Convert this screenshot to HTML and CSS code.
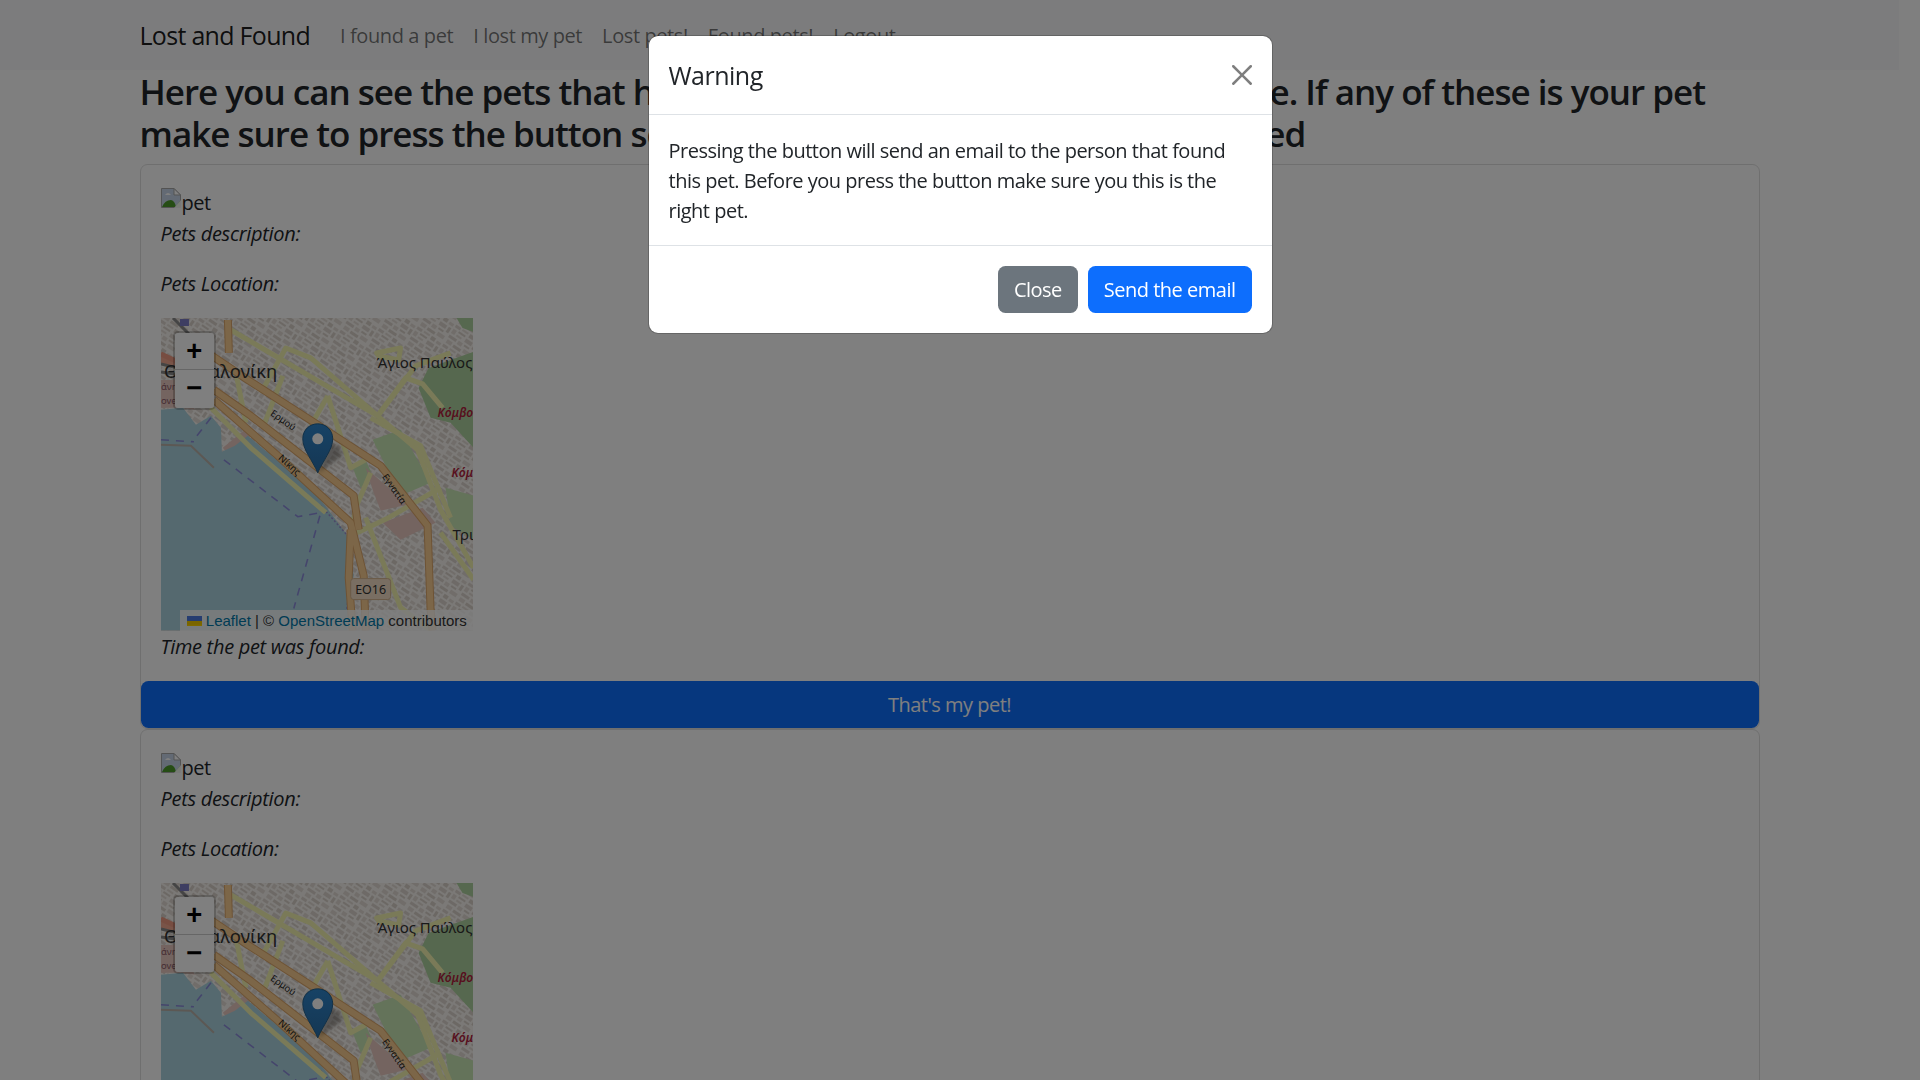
FILE: index.html
```html
<!DOCTYPE HTML>
<html>
    <head>
        <title>Lost and Found</title>
        <link rel="stylesheet" href="styles.css">
    </head>
    <body>

        <!-- map drawing, used by both cards -->
        <svg class="svg-defs" width="0" height="0">
            <defs>
                <pattern id="blocks" width="31" height="23" patternUnits="userSpaceOnUse" patternTransform="rotate(34)">
                    <rect width="31" height="23" fill="#f6f3ee"/>
                    <rect x="1" y="1" width="6" height="3" fill="#ddd5ce"/>
                    <rect x="9" y="1" width="7" height="2" fill="#e2dbd4"/>
                    <rect x="18" y="1" width="5" height="4" fill="#d8d0c9"/>
                    <rect x="25" y="2" width="5" height="3" fill="#e2dbd4"/>
                    <rect x="1" y="6" width="4" height="5" fill="#e2dbd4"/>
                    <rect x="7" y="5" width="8" height="2" fill="#d8d0c9"/>
                    <rect x="7" y="9" width="6" height="2" fill="#e2dbd4"/>
                    <rect x="17" y="7" width="8" height="4" fill="#ddd5ce"/>
                    <rect x="27" y="7" width="3" height="6" fill="#d8d0c9"/>
                    <rect x="1" y="13" width="9" height="3" fill="#dbd3cc"/>
                    <rect x="12" y="13" width="5" height="4" fill="#e2dbd4"/>
                    <rect x="19" y="13" width="6" height="2" fill="#d8d0c9"/>
                    <rect x="2" y="18" width="6" height="4" fill="#e2dbd4"/>
                    <rect x="10" y="19" width="9" height="3" fill="#d8d0c9"/>
                    <rect x="21" y="17" width="8" height="4" fill="#e2dbd4"/>
                </pattern>
                <linearGradient id="pinFill" x1="0" y1="0" x2="0" y2="1">
                    <stop offset="0" stop-color="#2e85cb"/>
                    <stop offset="1" stop-color="#2a6ea8"/>
                </linearGradient>
                <g id="mainRoads">
                    <path d="M47 35 L87 62 L157 107 L220 148 L267 208 L270 292 L272 313"/>
                    <path d="M53 72 L90 98 L193 178 L198 212"/>
                    <path d="M53 82 L117 138 L190 205 L203 258 L205 313"/>
                    <path d="M67 2 L68 35"/>
                    <path d="M190 212 L188 260 L192 313"/>
                </g>
                <symbol id="cityMap" viewBox="0 0 313 313">
                    <rect width="313" height="313" fill="url(#blocks)"/>

                    <!-- parks and coloured areas -->
                    <path class="park" d="M258 70 L268 50 L290 42 L313 34 L313 130 L290 105 L270 100 Z"/>
                    <path class="park" d="M296 0 L313 0 L313 14 L302 10 Z"/>
                    <path class="park-light" d="M212 122 L240 112 L270 165 L240 178 Z"/>
                    <path class="park-light" d="M285 170 L313 178 L313 222 L290 208 Z"/>
                    <path class="park-light" d="M192 150 L205 142 L212 158 L200 170 Z"/>
                    <path class="pink" d="M205 150 L222 165 L246 187 L220 193 L212 172 Z"/>
                    <path class="pink" d="M222 205 L262 190 L275 205 L240 222 Z"/>
                    <path class="pink" d="M0 62 L18 62 L34 92 L20 90 L0 90 Z"/>
                    <path class="salmon" d="M0 34 L28 52 L14 50 L0 46 Z"/>
                    <path class="pink" d="M62 130 L84 112 L90 118 L68 138 Z"/>

                    <!-- sea -->
                    <path class="sea" d="M0 92 L22 90 L35 107 L50 98 L60 110 L61 134 L74 128 L87 118 L123 148 L157 178 L187 218 L193 258 L187 292 L187 313 L0 313 Z"/>
                    <path class="pier" d="M0 127 L30 128 L53 150"/>
                    <path class="border-line" d="M0 122 L33 124 M36 118 L50 100 M63 142 L137 199 L160 195 L133 291"/>
                    <path class="coast-dots" d="M160 188 L187 218 L190 258 L186 292"/>

                    <!-- minor roads -->
                    <g class="road-yellow">
                        <path d="M70 12 L217 98 L257 132 L280 192 L313 250"/>
                        <path d="M217 98 L245 60 L262 66 L282 90"/>
                        <path d="M210 100 L260 128 L290 200"/>
                        <path d="M167 78 L150 108 M167 78 L190 150 L205 142"/>
                        <path d="M100 75 L125 30 L150 40 L217 98"/>
                        <path d="M210 155 L195 190 L190 218 L228 200 L280 170"/>
                        <path d="M205 200 L240 290 L270 313"/>
                        <path d="M50 90 L90 130 L165 195"/>
                        <path d="M75 55 L85 105 M122 58 L102 110"/>
                        <path d="M280 215 L313 262 M218 97 L255 48 L290 35"/>
                        <path d="M216 35 L240 30 L238 42 L218 38 Z"/>
                    </g>

                    <!-- main roads -->
                    <use href="#mainRoads" class="road-casing"/>
                    <use href="#mainRoads" class="road-orange"/>
                    <path class="salmon-road" d="M0 36 L30 50"/>
                    <path class="rail" d="M0 46 L16 50 M0 54 L14 56 M12 0 L30 18"/>
                    <rect class="station" x="19" y="1" width="9" height="7"/>

                    <!-- labels -->
                    <text class="label label-city" x="3" y="60">Θεσσαλονίκη</text>
                    <text class="label label-area" x="216" y="50">Άγιος Παύλος</text>
                    <text class="label label-area" x="292" y="222">Τρι</text>
                    <text class="label label-red" x="277" y="99">Κόμβο</text>
                    <text class="label label-red" x="291" y="159">Κόμ</text>
                    <text class="label label-road" x="109" y="97" transform="rotate(35 109 97)">Ερμού</text>
                    <text class="label label-road" x="117" y="141" transform="rotate(42 117 141)">Νίκης</text>
                    <text class="label label-road" x="221" y="159" transform="rotate(55 221 159)">Εγνατία</text>
                    <text class="label label-tiny" x="0" y="72">άνη</text>
                    <text class="label label-tiny" x="0" y="86">ove</text>
                    <rect class="shield" x="190" y="261" width="40" height="21" rx="3"/>
                    <text class="label label-shield" x="210" y="276">ΕΟ16</text>

                    <!-- marker -->
                    <path class="pin-shadow" d="M157 155 L182 138 L178 128 L168 126 Z"/>
                    <path class="pin" d="M157 155 C152 143 142 132 142 121 C142 112 149 106 157 106 C165 106 172 112 172 121 C172 132 162 143 157 155 Z"/>
                    <circle class="pin-dot" cx="157" cy="121" r="5.5"/>
                </symbol>
                <symbol id="petIcon" viewBox="0 0 20 20">
                    <path d="M0.5 0.5 H13 L19.5 7 V19.5 H0.5 Z" fill="#c6d5e8" stroke="#a7a7a7"/>
                    <path d="M13 0.5 V7 H19.5 Z" fill="#fff" stroke="#a7a7a7"/>
                    <path d="M4 7 Q7 3 10 7 Z" fill="#fff"/>
                    <path d="M1 19 Q4 12 10 12 Q14 13 15 19 Z" fill="#4c9a2a"/>
                    <path d="M14 19 L19 13 V19 Z" fill="#8fc170"/>
                    <path d="M13 20 L20 12 V20 Z" fill="#fff" opacity=".85"/>
                </symbol>
            </defs>
        </svg>

        <nav class="navbar">
            <div class="container nav-inner">
                <a class="brand">Lost and Found</a>
                <ul class="nav-links">
                    <li><a>I found a pet</a></li>
                    <li><a>I lost my pet</a></li>
                    <li><a>Lost pets!</a></li>
                    <li><a>Found pets!</a></li>
                    <li><a>Logout</a></li>
                </ul>
            </div>
        </nav>

        <div class="container">

            <h3 class="page-title">Here you can see the pets that have been found by our users on this site. If any of these is your pet make sure to press the button so the person who found him gets notified</h3>

            <div class="card">
                <div class="card-body">
                    <div class="pet-img"><svg class="broken-icon"><use href="#petIcon"/></svg>pet</div>
                    <p class="pet-info">Pets description:</p>
                    <p class="pet-info">Pets Location:</p>
                    <div class="map">
                        <svg class="map-tiles"><use href="#cityMap"/></svg>
                        <div class="zoom-box">
                            <a class="zoom-in">+</a>
                            <a class="zoom-out">&#8722;</a>
                        </div>
                        <div class="attribution">
                            <svg class="flag" viewBox="0 0 12 8"><rect width="12" height="4" fill="#4C7BE1"/><rect y="4" width="12" height="4" fill="#FFD500"/><rect y="4" width="12" height="3" fill="#E0BC00" opacity=".4"/></svg> <a>Leaflet</a> | © <a>OpenStreetMap</a> contributors
                        </div>
                    </div>
                    <p class="pet-info">Time the pet was found:</p>
                </div>
                <button class="btn-primary btn-wide">That's my pet!</button>
            </div>

            <div class="card">
                <div class="card-body">
                    <div class="pet-img"><svg class="broken-icon"><use href="#petIcon"/></svg>pet</div>
                    <p class="pet-info">Pets description:</p>
                    <p class="pet-info">Pets Location:</p>
                    <div class="map">
                        <svg class="map-tiles"><use href="#cityMap"/></svg>
                        <div class="zoom-box">
                            <a class="zoom-in">+</a>
                            <a class="zoom-out">&#8722;</a>
                        </div>
                    </div>
                </div>
            </div>

        </div>

        <div class="backdrop"></div>

        <div class="modal">
            <div class="modal-content">
                <div class="modal-header">
                    <h5 class="modal-title">Warning</h5>
                    <svg class="btn-close" viewBox="0 0 16 16"><path d="M.293.293a1 1 0 0 1 1.414 0L8 6.586 14.293.293a1 1 0 1 1 1.414 1.414L9.414 8l6.293 6.293a1 1 0 0 1-1.414 1.414L8 9.414l-6.293 6.293a1 1 0 0 1-1.414-1.414L6.586 8 .293 1.707a1 1 0 0 1 0-1.414z"/></svg>
                </div>
                <div class="modal-body">Pressing the button will send an email to the person that found this pet. Before you press the button make sure you this is the right pet.</div>
                <div class="modal-footer">
                    <button class="btn-secondary">Close</button>
                    <button class="btn-primary">Send the email</button>
                </div>
            </div>
        </div>

    </body>
</html>
```

FILE: styles.css
```css
*{
    margin: 0;
    padding: 0;
    box-sizing: border-box;
}

html, body{
    height: 100%;
    overflow: hidden;
}

body{
    padding-right: 21px;
    font-family: "Open Sans", "Liberation Sans", sans-serif;
    font-size: 20px;
    line-height: 30px;
    letter-spacing: -0.5px;
    color: #212529;
    background: #fff;
}

.svg-defs{
    position: absolute;
}

.container{
    max-width: 1650px;
    margin: 0 auto;
    padding: 0 15px;
}

/* navbar */
.navbar{
    height: 70px;
    background: #f8f9fa;
}

.nav-inner{
    display: flex;
    align-items: center;
    height: 100%;
}

.brand{
    font-size: 25px;
    margin-right: 20px;
    letter-spacing: -0.7px;
    color: rgba(0, 0, 0, .9);
}

.nav-links{
    display: flex;
    list-style: none;
    padding-top: 1px;
}

.nav-links a{
    display: block;
    padding: 0 10px;
    letter-spacing: -0.4px;
    color: rgba(0, 0, 0, .55);
}

/* page */
.page-title{
    font-size: 35px;
    font-weight: 600;
    line-height: 42px;
    padding-top: 0.5px;
    margin-bottom: 9.5px;
    letter-spacing: -1px;
}

.card{
    border: 1.25px solid rgba(0, 0, 0, .125);
    border-radius: 7.5px;
}

.card-body{
    padding: 20px;
}

.pet-img{
    display: flex;
    align-items: flex-end;
    height: 33px;
    padding-top: 3px;
    line-height: 30px;
}

.broken-icon{
    width: 20px;
    height: 20px;
    margin-bottom: 10px;
    margin-right: 1px;
}

.pet-info{
    font-style: italic;
    letter-spacing: -0.3px;
    padding-top: 1px;
    margin-bottom: 19px;
}

.pet-info:last-child{
    margin-bottom: -1px;
}

.map{
    position: relative;
    width: 312.5px;
    height: 312.5px;
    overflow: hidden;
    background: #ddd;
}

.map-tiles{
    display: block;
    width: 100%;
    height: 100%;
}

.zoom-box{
    position: absolute;
    left: 12.5px;
    top: 12.5px;
    width: 42.5px;
    border: 2.5px solid rgba(0, 0, 0, .2);
    border-radius: 5px;
    background-clip: padding-box;
}

.zoom-box a{
    display: block;
    height: 37.5px;
    background: #fff;
    color: #000;
    font-family: "Liberation Mono", monospace;
    font-size: 27.5px;
    font-weight: 700;
    line-height: 40px;
    letter-spacing: 0;
    text-align: center;
}

.zoom-in{
    border-bottom: 1.25px solid #ccc;
    border-radius: 3px 3px 0 0;
}

.zoom-out{
    border-radius: 0 0 3px 3px;
}

.attribution{
    position: absolute;
    right: 0;
    bottom: 0;
    height: 21px;
    padding: 0 6.25px;
    background: rgba(255, 255, 255, .8);
    font-family: "Liberation Sans", sans-serif;
    font-size: 15px;
    line-height: 21px;
    letter-spacing: 0;
    color: #333;
    white-space: nowrap;
}

.attribution a{
    color: #0078a8;
}

.flag{
    width: 15px;
    height: 10px;
}

/* map drawing */
.park{ fill: #add19e; }
.park-light{ fill: #c8e6b4; }
.pink{ fill: #e8c8c0; }
.salmon{ fill: #f2a890; }
.sea{ fill: #aad3df; }
.pier{ fill: none; stroke: #b8b0a8; stroke-width: 2; }
.border-line{ fill: none; stroke: #8b8bd8; stroke-width: 1.6; stroke-dasharray: 8 7; }
.coast-dots{ fill: none; stroke: #9a8ed0; stroke-width: 1.5; stroke-dasharray: 2 2; }
.road-yellow{ fill: none; stroke: #f4f5b0; stroke-width: 5; stroke-linejoin: round; }
.road-casing{ fill: none; stroke: #dca66a; stroke-width: 8; stroke-linejoin: round; }
.road-orange{ fill: none; stroke: #f8cc90; stroke-width: 6; stroke-linejoin: round; }
.salmon-road{ fill: none; stroke: #ee9a82; stroke-width: 5; }
.rail{ fill: none; stroke: #8a8a8a; stroke-width: 3; }
.station{ fill: #7c7cc4; }
.label{ font-family: "Noto Sans", sans-serif; fill: #333; letter-spacing: 0; }
.label-city{ font-size: 18.5px; }
.label-area{ font-size: 15px; }
.label-red{ font-size: 12px; font-style: italic; font-weight: 600; fill: #b0203c; }
.label-road{ font-size: 9.5px; fill: #222; }
.label-tiny{ font-size: 9.5px; fill: #8a5a68; }
.shield{ fill: #f3dcc4; stroke: #d4b48f; }
.label-shield{ font-size: 12.5px; text-anchor: middle; fill: #333; }
.pin{ fill: url(#pinFill); stroke: #24618f; stroke-width: 1; }
.pin-dot{ fill: #fff; }
.pin-shadow{ fill: rgba(0, 0, 0, .3); filter: blur(2px); }

/* buttons */
button{
    height: 47px;
    padding: 0 15px;
    border: 1.25px solid transparent;
    border-radius: 7.5px;
    font-family: inherit;
    font-size: 20px;
    letter-spacing: inherit;
    color: #fff;
}

.btn-primary{
    background: #0d6efd;
}

.btn-secondary{
    background: #6c757d;
}

.btn-wide{
    display: block;
    width: 100%;
}

/* modal */
.backdrop{
    position: fixed;
    top: 0;
    left: 0;
    width: 100%;
    height: 100%;
    background: #000;
    opacity: .5;
}

.modal{
    position: fixed;
    top: 0;
    left: 0;
    width: 100%;
    padding-top: 35px;
    display: flex;
    justify-content: center;
}

.modal-content{
    width: 625px;
    background: #fff;
    border: 1.25px solid rgba(0, 0, 0, .2);
    border-radius: 10px;
    background-clip: padding-box;
}

.modal-header{
    display: flex;
    align-items: center;
    justify-content: space-between;
    height: 79px;
    padding: 0 20px;
    border-bottom: 1.25px solid #dee2e6;
}

.modal-title{
    font-size: 25px;
    font-weight: 500;
    line-height: 37.5px;
    padding-top: 2px;
}

.btn-close{
    width: 20px;
    height: 20px;
    opacity: .5;
}

.modal-body{
    padding: 21px 20px 19px;
}

.modal-footer{
    display: flex;
    justify-content: flex-end;
    gap: 10px;
    padding: 20px;
    border-top: 1.25px solid #dee2e6;
}
```
